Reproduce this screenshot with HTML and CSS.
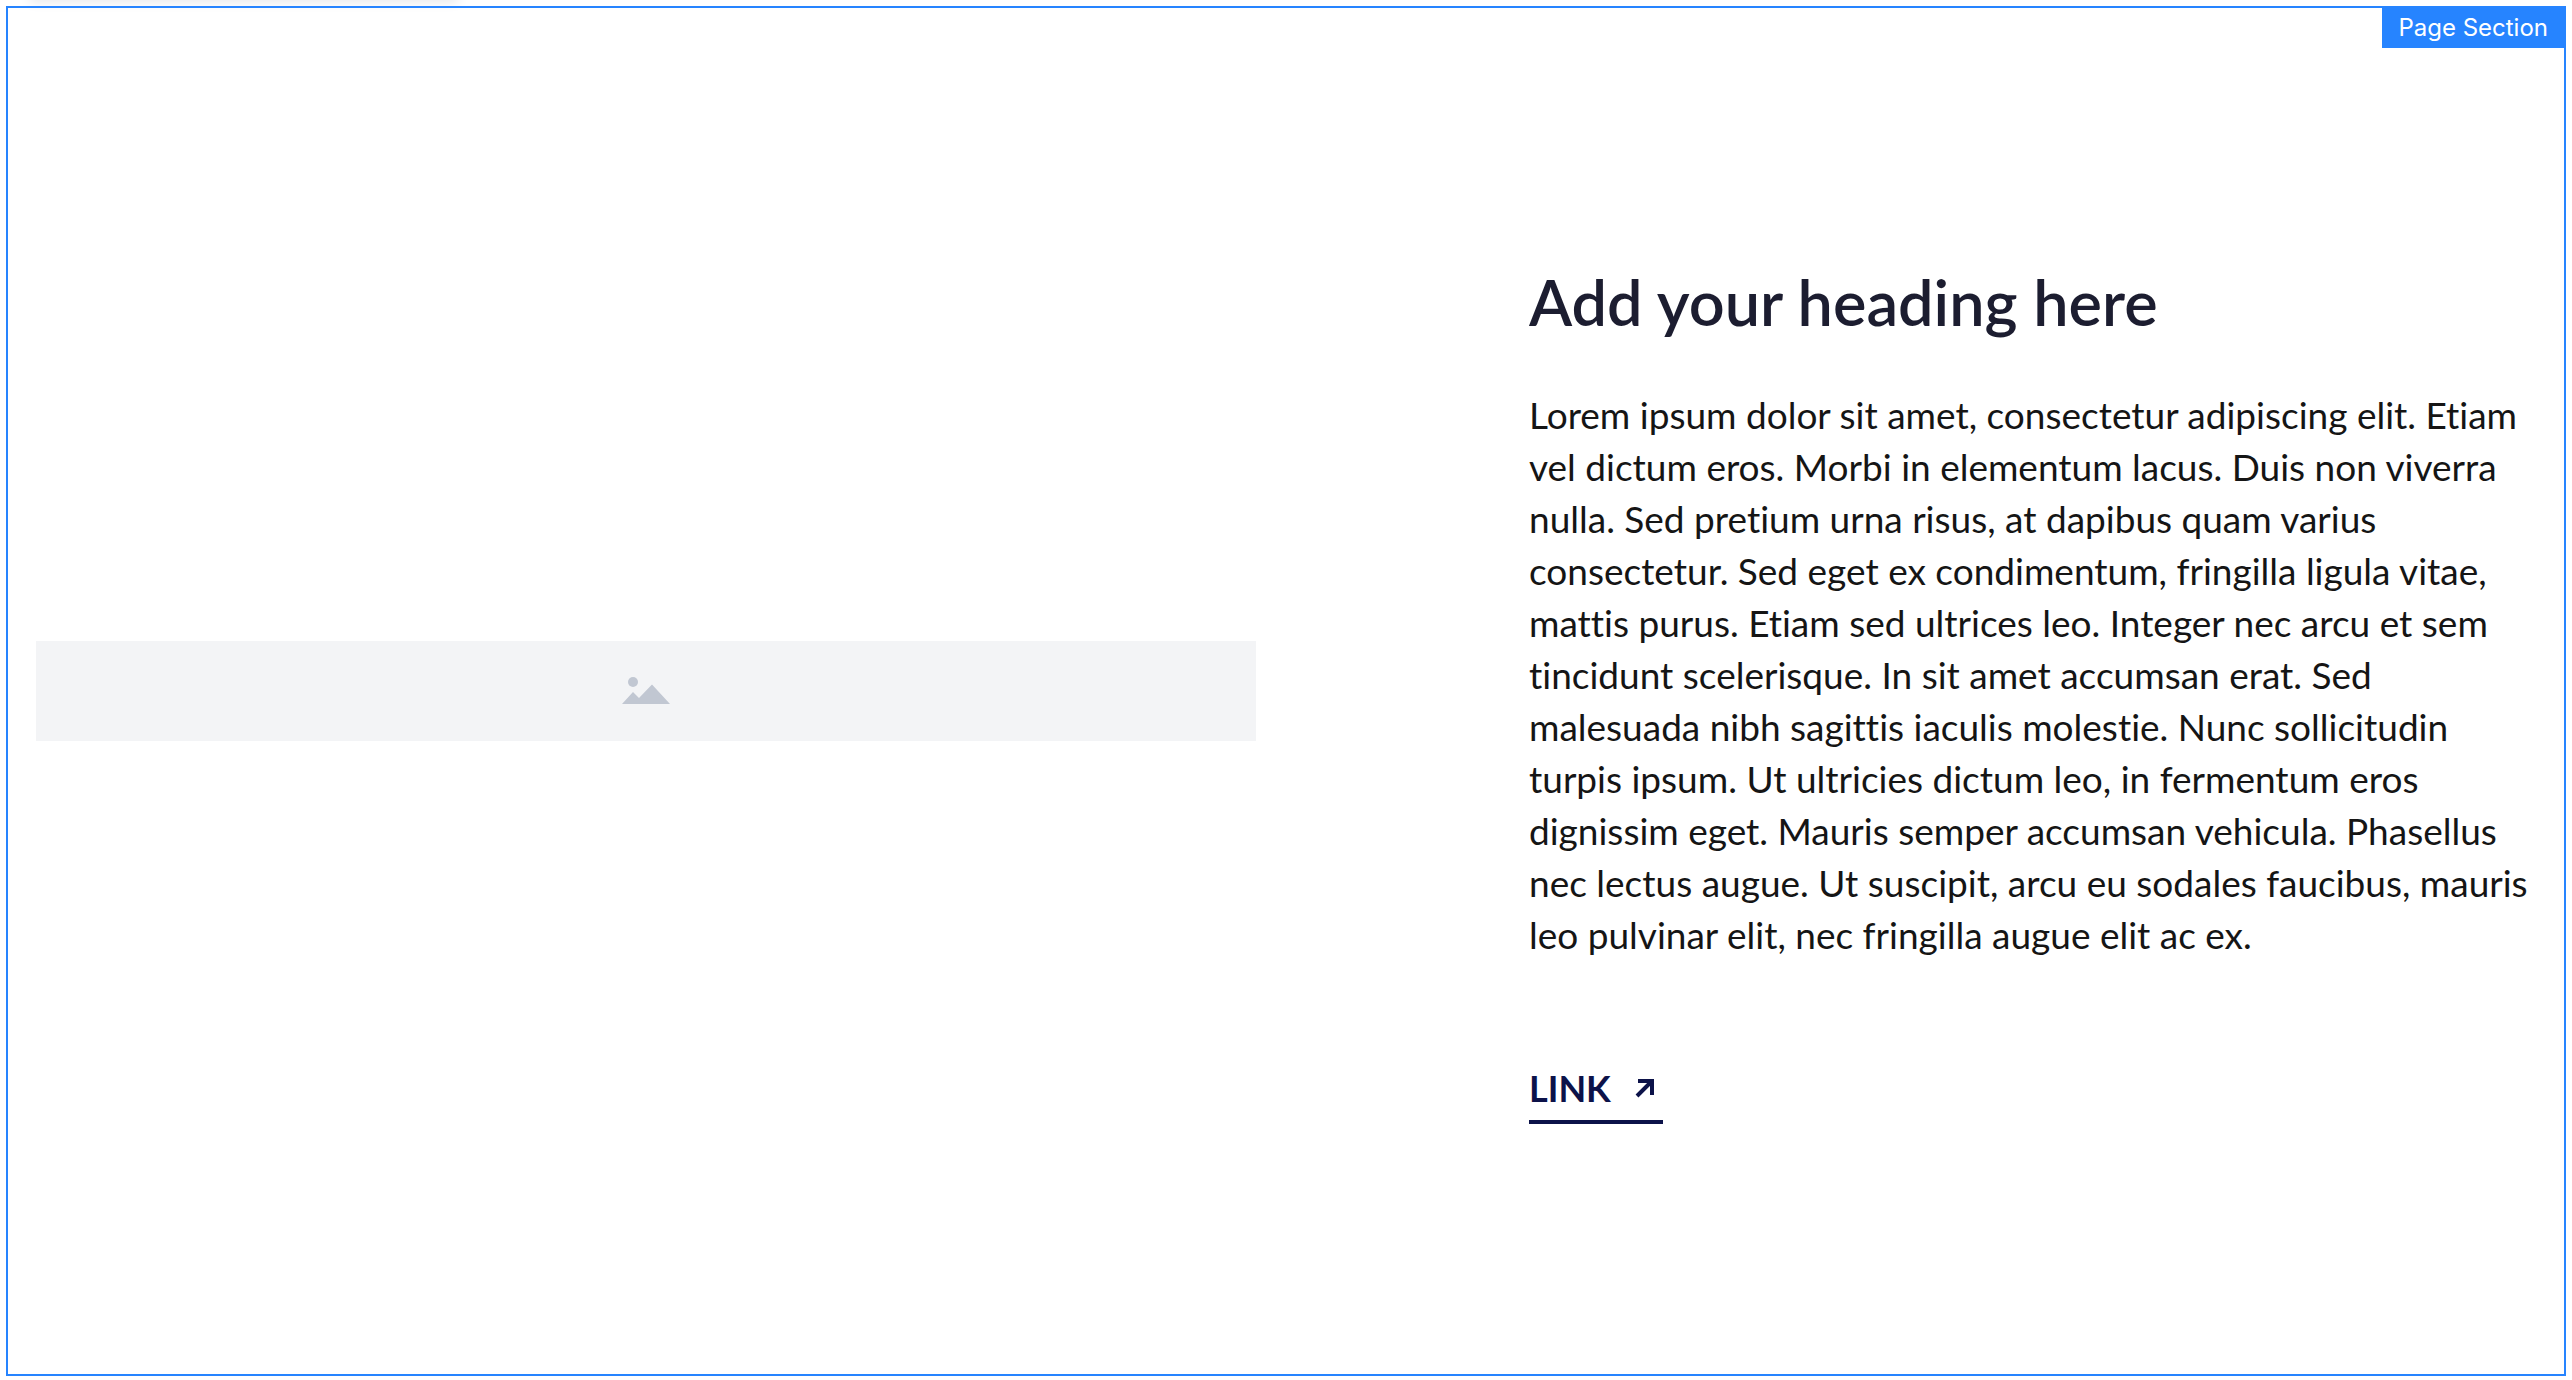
FILE: index.html
```html
<!DOCTYPE html>
<html lang="en">
<head>
<meta charset="utf-8">
<title>Page Section</title>
<link rel="stylesheet" href="styles.css">
</head>
<body>
<main class="page-section">
  <span class="section-label">Page Section</span>
  <div class="media">
    <svg class="media-icon" viewBox="0 0 48 28" role="img" aria-label="Image placeholder">
      <circle cx="11" cy="5" r="5"/>
      <path d="M0 27 11 15l6 6L30 7.500 48 27z"/>
    </svg>
  </div>
  <article class="content">
    <h1 class="heading">Add your heading here</h1>
    <p class="body-text">Lorem ipsum dolor sit amet, consectetur adipiscing elit. Etiam<br>
      vel dictum eros. Morbi in elementum lacus. Duis non viverra<br>
      nulla. Sed pretium urna risus, at dapibus quam varius<br>
      consectetur. Sed eget ex condimentum, fringilla ligula vitae,<br>
      mattis purus. Etiam sed ultrices leo. Integer nec arcu et sem<br>
      tincidunt scelerisque. In sit amet accumsan erat. Sed<br>
      malesuada nibh sagittis iaculis molestie. Nunc sollicitudin<br>
      turpis ipsum. Ut ultricies dictum leo, in fermentum eros<br>
      dignissim eget. Mauris semper accumsan vehicula. Phasellus<br>
      nec lectus augue. Ut suscipit, arcu eu sodales faucibus, mauris<br>
      leo pulvinar elit, nec fringilla augue elit ac ex.</p>
    <a class="link" href="#">LINK
      <svg class="link-icon" viewBox="0 0 20 20" aria-hidden="true"><path d="M3 3h14v14M17 3 2 18"/></svg>
    </a>
  </article>
</main>
</body>
</html>
```
FILE: styles.css
```css
* { box-sizing: border-box; }

body {
  margin: 0;
  padding: 6px 6px 4px;
  min-height: 100vh;
  display: flex;
  background: #fff;
  color: #151515;
  font-family: Lato, "Open Sans", sans-serif;
  font-variant-ligatures: none;
}

/* Soft shadow of the toolbar above the page */
body::before {
  content: "";
  position: absolute;
  top: -10px;
  left: 32px;
  width: 424px;
  height: 8px;
  box-shadow: 0 2px 12px 2px #e4e6ea;
}

.page-section {
  position: relative;
  flex: 1;
  display: grid;
  grid-template-columns: 1220fr 1007fr;
  column-gap: 273px;
  align-items: center;
  padding: 28px;
  border: 2px solid #2684ff;
}

.section-label {
  position: absolute;
  top: -2px;
  right: -2px;
  padding: 2px 18px 0 16px;
  background: #2684ff;
  color: #fff;
  font: 400 24px/40px Inter, sans-serif;
}

.media {
  height: 100px;
  display: flex;
  align-items: center;
  justify-content: center;
  background: #f3f4f6;
}

.media-icon {
  width: 48px;
  height: 28px;
  fill: #c1c7d2;
}

.content {
  padding-top: 2px;
}

.heading {
  margin: 0 0 45px;
  color: #1c1d30;
  font-family: "Lato Semibold", "Lato Medium", Lato, "Open Sans", sans-serif;
  font-size: 63px;
  font-weight: 600;
  line-height: 84px;
}

.body-text {
  margin: 0 0 105px;
  font-size: 37px;
  line-height: 52px;
  white-space: nowrap;
}

.link {
  display: inline-flex;
  align-items: center;
  gap: 24px;
  padding: 0 8px 10px 0;
  border-bottom: 4px solid #0c1249;
  color: #0c1249;
  font-size: 36px;
  font-weight: 700;
  line-height: 44px;
  text-decoration: none;
}

.link-icon {
  width: 20px;
  height: 20px;
  fill: none;
  stroke: currentColor;
  stroke-width: 4;
}
```
